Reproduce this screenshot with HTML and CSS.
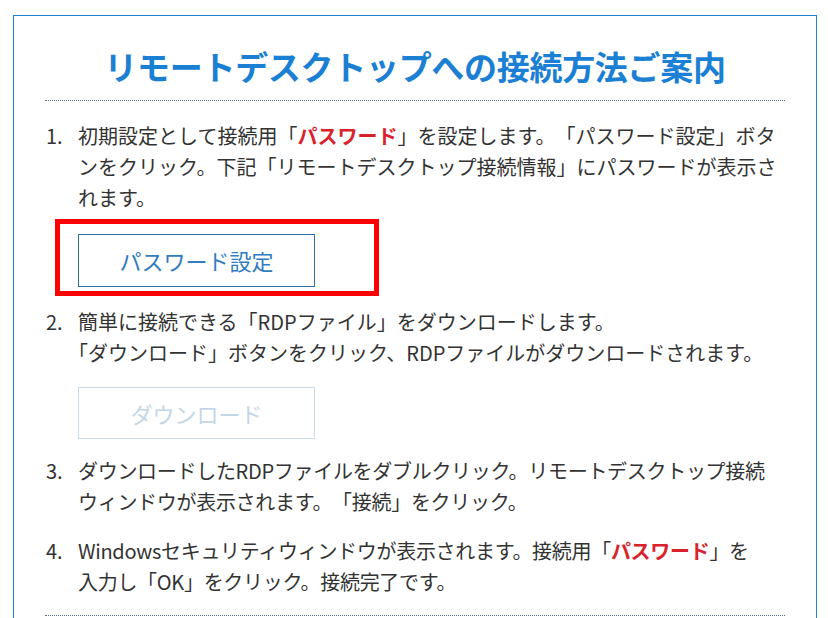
FILE: index.html
```html
<!DOCTYPE html>
<html lang="ja">
<head>
<meta charset="utf-8">
<title>リモートデスクトップへの接続方法ご案内</title>
<link rel="stylesheet" href="styles.css">
</head>
<body>
<div class="panel">
  <h1 class="title">リモートデスクトップへの接続方法ご案内</h1>
  <ol class="steps">
    <li class="step">
      <span class="num">1.</span>
      <div class="body">
        <p class="text">初期設定として接続用「<strong class="em">パスワード</strong>」を設定します。「パスワード設定」ボタ<br>ンをクリック。下記「リモートデスクトップ接続情報」にパスワードが表示さ<br>れます。</p>
        <div class="highlight"><button class="btn">パスワード設定</button></div>
      </div>
    </li>
    <li class="step step-2">
      <span class="num">2.</span>
      <div class="body">
        <p class="text">簡単に接続できる「RDPファイル」をダウンロードします。<br><span class="indent-fix">「ダウンロード」ボタンをクリック、RDPファイルがダウンロードされます。</span></p>
        <button class="btn btn-disabled" disabled>ダウンロード</button>
      </div>
    </li>
    <li class="step step-3">
      <span class="num">3.</span>
      <div class="body">
        <p class="text narrow">ダウンロードしたRDPファイルをダブルクリック。リモートデスクトップ接続<br>ウィンドウが表示されます。「接続」をクリック。</p>
      </div>
    </li>
    <li class="step step-4">
      <span class="num">4.</span>
      <div class="body">
        <p class="text narrow">Windowsセキュリティウィンドウが表示されます。接続用「<strong class="em">パスワード</strong>」を<br>入力し「OK」をクリック。接続完了です。</p>
      </div>
    </li>
  </ol>
  <div class="rule"></div>
</div>
</body>
</html>
```

FILE: styles.css
```css
html, body {
  margin: 0;
  padding: 0;
  background: #ffffff;
}

body {
  font-family: "Noto Sans CJK JP", "Noto Sans", sans-serif;
  color: #333333;
  height: 618px;
  overflow: hidden;
  text-spacing-trim: space-all;
}

.panel {
  margin: 15px 0 0 13px;
  border: 1px solid #1d7fd2;
  border-bottom: none;
  padding: 0 31px;
  box-sizing: border-box;
  width: 804px;
  height: 603px;
}

.title {
  margin: 0;
  padding: 30px 0 13px;
  font-size: 33px;
  line-height: 41px;
  font-weight: 700;
  color: #1b7fd4;
  text-align: center;
  letter-spacing: -0.3px;
  border-bottom: 1px dotted #4f6f8f;
}

.steps {
  list-style: none;
  margin: 19px 0 0;
  padding: 0;
}

.step {
  display: grid;
  grid-template-columns: 33px 1fr;
  font-size: 20px;
  line-height: 31px;
}

.step-2 { margin-top: 10px; }
.step-3 { margin-top: 16px; }
.step-4 { margin-top: 18px; }

.num {
  padding-left: 1px;
}

.text {
  margin: 0;
  white-space: nowrap;
}

.indent-fix {
  margin-left: -10px;
}

.narrow {
  letter-spacing: -0.3px;
}

.em {
  color: #d8232c;
  font-weight: 700;
}

.highlight {
  display: inline-block;
  margin: 6px 0 0 -23px;
  border: 5px solid #ff0000;
  padding: 10px 59px 4px 18px;
}

.btn {
  display: block;
  width: 237px;
  height: 53px;
  margin: 0;
  padding: 0;
  background: #ffffff;
  border: 1px solid #2d6fa9;
  color: #2f7cc2;
  font-family: "Noto Sans CJK JP", "Noto Sans", sans-serif;
  font-size: 22px;
  line-height: 51px;
  text-align: center;
}

.btn-disabled {
  height: 52px;
  margin-top: 19px;
  border-color: #c9dcec;
  color: #c3d6e7;
}

.rule {
  margin-top: 18px;
  border-bottom: 1px dotted #4f6f8f;
}
```
